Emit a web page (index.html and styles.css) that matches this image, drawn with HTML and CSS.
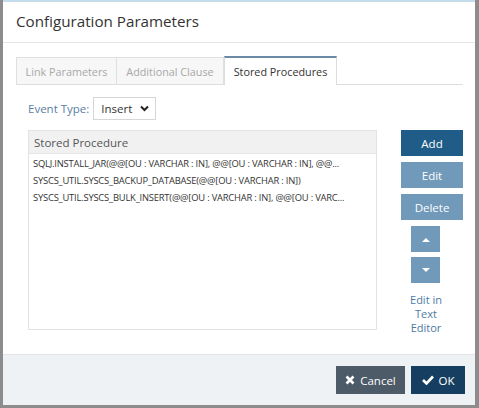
FILE: index.html
```html
<!DOCTYPE html>
<html>
<head>
<meta charset="utf-8">
<link rel="stylesheet" href="styles.css">
</head>
<body>
<div class="dialog">
  <div class="header"><h1 class="title">Configuration Parameters</h1></div>
  <div class="body">
    <div class="tabs">
      <div class="tab">Link Parameters</div>
      <div class="tab">Additional Clause</div>
      <div class="tab active">Stored Procedures</div>
      <div class="tab-fill"></div>
    </div>
    <div class="pane">
      <div class="event-row">
        <span class="event-label">Event Type:</span>
        <div class="select"><span>Insert</span>
          <svg class="chev" width="9" height="7" viewBox="0 0 9 7"><path d="M1 1.5 L4.5 5 L8 1.5" fill="none" stroke="#222" stroke-width="2"/></svg>
        </div>
      </div>
      <div class="main">
        <div class="table">
          <div class="thead">Stored Procedure</div>
          <div class="row">SQLJ.INSTALL_JAR(@@[OU : VARCHAR : IN], @@[OU : VARCHAR : IN], @@...</div>
          <div class="row">SYSCS_UTIL.SYSCS_BACKUP_DATABASE(@@[OU : VARCHAR : IN])</div>
          <div class="row">SYSCS_UTIL.SYSCS_BULK_INSERT(@@[OU : VARCHAR : IN], @@[OU : VARC...</div>
        </div>
        <div class="side">
          <div class="btn btn-add">Add</div>
          <div class="btn btn-light">Edit</div>
          <div class="btn btn-light">Delete</div>
          <div class="arrow"><svg width="8" height="5" viewBox="0 0 8 5"><path d="M0 5 L4 1 L8 5 Z" fill="#fff"/></svg></div>
          <div class="arrow"><svg width="8" height="5" viewBox="0 0 8 5"><path d="M0 0 L4 4 L8 0 Z" fill="#fff"/></svg></div>
          <div class="link">Edit in Text Editor</div>
        </div>
      </div>
    </div>
  </div>
  <div class="footer">
    <div class="fbtn cancel"><svg width="10" height="10" viewBox="0 0 10 10"><path d="M1.5 1.5 L8.5 8.5 M8.5 1.5 L1.5 8.5" stroke="#fff" stroke-width="2.6"/></svg>Cancel</div>
    <div class="fbtn ok"><svg width="12" height="10" viewBox="0 0 12 10"><path d="M1 5 L4.5 8.5 L11 1.5" fill="none" stroke="#fff" stroke-width="2.6"/></svg>OK</div>
  </div>
</div>
</body>
</html>
```
FILE: styles.css
```css
html, body { margin: 0; padding: 0; }
body {
  width: 479px;
  height: 408px;
  background: #8c8c8c;
  font-family: "Open Sans", "Liberation Sans", sans-serif;
  overflow: hidden;
}
.dialog {
  margin: 0 4px 0 3px;
  height: 405px;
  background: #fff;
  border-top: 2px solid #c4dcec;
  box-sizing: border-box;
  display: flex;
  flex-direction: column;
}
.header {
  height: 40px;
  border-bottom: 1px solid #e6e6e6;
  padding-left: 13px;
  display: flex;
  align-items: center;
}
.title {
  margin: 0 0 2px;
  font-size: 15.2px;
  font-weight: 400;
  color: #333;
}
.body {
  flex: 1;
  padding: 13px 12px 0 13px;
}
.tabs {
  display: flex;
  height: 29px;
}
.tab {
  box-sizing: border-box;
  border: 1px solid #e0e0e0;
  border-bottom-color: #ddd;
  background: #f7f7f7;
  color: #a8a8a8;
  font-size: 10.8px;
  white-space: nowrap;
  padding: 0;
  display: flex;
  align-items: center;
  justify-content: center;
  margin-top: 1px;
  height: 28px;
  flex: none;
}
.tab + .tab { border-left: none; }
.tab:first-child { width: 101px; }
.tab:nth-child(2) { width: 107px; }
.tab.active {
  background: #fff;
  color: #333;
  border: 1px solid #ddd;
  border-top: 2px solid #6b8aa6;
  border-bottom: none;
  margin-top: 0;
  height: 29px;
  width: 113px;
}
.tab-fill {
  flex: 1;
  border-bottom: 1px solid #ddd;
}
.pane {
  padding: 12px 0 0 12px;
}
.event-row {
  display: flex;
  align-items: center;
  gap: 4px;
  height: 23px;
}
.event-label {
  font-size: 11.5px;
  color: #5a7ea3;
}
.select {
  box-sizing: border-box;
  width: 63px;
  height: 23px;
  border: 1px solid #d6d6d6;
  display: flex;
  align-items: center;
  justify-content: space-between;
  padding: 0 6px 0 7px;
  font-size: 11.5px;
  color: #333;
}
.main {
  display: flex;
  margin-top: 10px;
  gap: 24px;
}
.table {
  box-sizing: border-box;
  width: 350px;
  height: 200px;
  border: 1px solid #e3e3e3;
}
.thead {
  height: 22px;
  background: #f1f1f1;
  border-bottom: 1px solid #e6e6e6;
  font-size: 11.5px;
  color: #555;
  display: flex;
  align-items: center;
  padding-left: 5px;
  margin-bottom: 1px;
}
.row {
  font-size: 9.4px;
  letter-spacing: -0.2px;
  line-height: 17px;
  color: #333;
  padding: 0 2px 0 4px;
  white-space: nowrap;
  overflow: hidden;
}
.side {
  width: 62px;
  display: flex;
  flex-direction: column;
  align-items: center;
  gap: 6px;
}
.btn {
  width: 62px;
  height: 26px;
  display: flex;
  align-items: center;
  justify-content: center;
  color: #fff;
  font-size: 11.5px;
}
.btn-add { background: #1f5c87; }
.btn-light { background: #7199b9; }
.arrow {
  align-self: flex-start;
  margin-left: 10px;
  width: 29px;
  height: 26px;
  background: #7199b9;
  display: flex;
  align-items: center;
  justify-content: center;
}
.arrow + .arrow { margin-top: -1px; }
.link {
  align-self: flex-start;
  margin-left: 5px;
  margin-top: 4px;
  width: 40px;
  text-align: center;
  font-size: 11px;
  line-height: 14px;
  color: #4d7aa6;
}
.footer {
  height: 50px;
  background: #eef2f5;
  border-top: 1px solid #e2e6ea;
  display: flex;
  justify-content: flex-end;
  align-items: center;
  gap: 6px;
  padding-right: 10px;
}
.fbtn {
  height: 28px;
  display: flex;
  align-items: center;
  justify-content: center;
  gap: 5px;
  color: #fff;
  font-size: 11.5px;
}
.cancel { width: 69px; background: #4d5a67; }
.ok { width: 54px; background: #163e60; }
```
